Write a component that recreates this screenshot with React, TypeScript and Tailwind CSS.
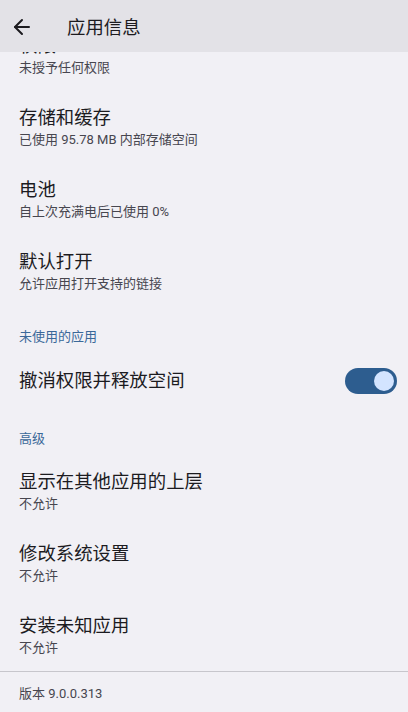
import { ArrowLeft } from "lucide-react"

type Item = { title: string; summary?: string }

const topItems: Item[] = [
  { title: "权限", summary: "未授予任何权限" },
  { title: "存储和缓存", summary: "已使用 95.78 MB 内部存储空间" },
  { title: "电池", summary: "自上次充满电后已使用 0%" },
  { title: "默认打开", summary: "允许应用打开支持的链接" },
]

const advancedItems: Item[] = [
  { title: "显示在其他应用的上层", summary: "不允许" },
  { title: "修改系统设置", summary: "不允许" },
  { title: "安装未知应用", summary: "不允许" },
]

function Pref({ item }: { item: Item }) {
  return (
    <div className="flex h-[72px] flex-col justify-center px-[19px] pt-[2px]">
      <div className="text-[18.4px] leading-6 text-[#1c1b1f]">{item.title}</div>
      {item.summary && (
        <div className="text-[13px] leading-5 text-[#47464f]">{item.summary}</div>
      )}
    </div>
  )
}

function Category({ label }: { label: string }) {
  return (
    <div className="px-[19px] pt-5 pb-[6px] text-[13px] leading-5 text-[#3a6899]">{label}</div>
  )
}

export default function App() {
  return (
    <div
      className="flex h-[712px] w-[408px] flex-col overflow-hidden bg-[#f1f0f5]"
      style={{ fontFamily: 'Roboto, "Noto Sans CJK SC", sans-serif' }}
    >
      <header className="z-10 flex h-[52px] shrink-0 items-center bg-[#e3e2e7] pl-[10px]">
        <ArrowLeft className="mt-[2px] h-6 w-6 text-[#1c1b1f]" strokeWidth={2} />
        <h1 className="ml-[33px] mt-[3px] text-[18.4px] text-[#1c1b1f]">应用信息</h1>
      </header>

      <div className="flex-1 overflow-hidden">
        <div className="-mt-[33px]">
          {topItems.map((item) => (
            <Pref key={item.title} item={item} />
          ))}

          <Category label="未使用的应用" />
          <div className="flex h-14 items-center justify-between pl-[19px] pr-[11px]">
            <span className="text-[18.4px] leading-6 text-[#1c1b1f]">撤消权限并释放空间</span>
            <div className="flex h-[26px] w-[52px] items-center justify-end rounded-full bg-[#2d5d8f] pr-[3px]">
              <div className="h-5 w-5 rounded-full bg-[#d3e4ff]" />
            </div>
          </div>

          <Category label="高级" />
          {advancedItems.map((item) => (
            <Pref key={item.title} item={item} />
          ))}

          <div className="border-t border-[#c7c6cc] px-[19px] pt-3 text-[13px] leading-5 text-[#47464f]">
            版本 9.0.0.313
          </div>
        </div>
      </div>
    </div>
  )
}
